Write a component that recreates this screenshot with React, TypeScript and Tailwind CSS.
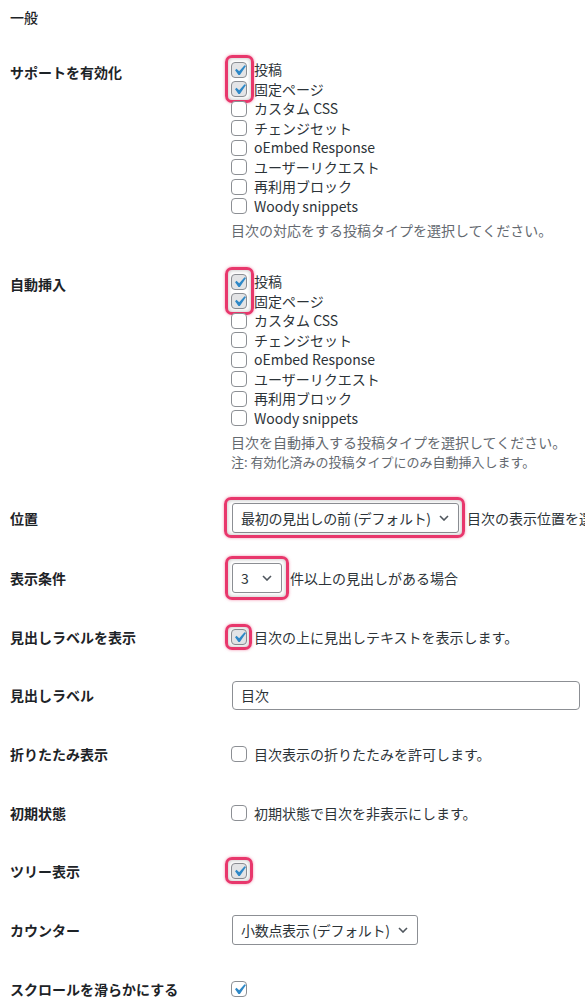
import React from "react";

const FONT = { fontFamily: '"Noto Sans CJK JP", "Noto Sans", sans-serif' };

function Check({ checked = false, hl = false }: { checked?: boolean; hl?: boolean }) {
  return (
    <span
      className={`relative inline-block w-4 h-4 shrink-0 rounded-[4px] border border-[#8c8f94] ${
        hl ? "bg-[#e3e4e6]" : "bg-white"
      }`}
    >
      {checked && (
        <svg
          viewBox="0 0 20 20"
          className="absolute left-[-3px] top-[-3px] w-[21px] h-[21px]"
        >
          <path d="M14.83 4.89l1.34.94-5.81 8.38H9.02L5.78 9.67l1.34-1.25 2.57 2.4z" fill="#2e88c7" />
        </svg>
      )}
    </span>
  );
}

function Highlight({ cls }: { cls: string }) {
  return (
    <span
      className={`pointer-events-none absolute rounded-[7px] border-[3px] border-[#e8376c] shadow-[0_0_3px_rgba(232,55,108,0.55),inset_0_0_4px_rgba(0,0,0,0.28)] ${cls}`}
    />
  );
}

function Item({ label, checked = false, hl = false }: { label: string; checked?: boolean; hl?: boolean }) {
  return (
    <div className="flex items-center h-[19.5px] gap-[7px] text-[#2c3338]">
      <Check checked={checked} hl={hl} />
      <span className="leading-[19.5px]">{label}</span>
    </div>
  );
}

function Chevron() {
  return (
    <svg viewBox="0 0 10 6" className="w-[10px] h-[6px] shrink-0">
      <polyline points="1,1 5,5 9,1" fill="none" stroke="#50575e" strokeWidth="1.6" />
    </svg>
  );
}

function Select({ text, w }: { text: string; w: string }) {
  return (
    <div
      className={`flex items-center justify-between gap-1 h-[30px] ${w} shrink-0 rounded-[3px] border border-[#8c8f94] bg-white pl-2 pr-[9px] text-[#2c3338]`}
    >
      <span className="leading-[20px] tracking-[-0.3px]">{text}</span>
      <Chevron />
    </div>
  );
}

const others = ["カスタム CSS", "チェンジセット", "oEmbed Response", "ユーザーリクエスト", "再利用ブロック", "Woody snippets"];

function Label({ children, top = false }: { children: React.ReactNode; top?: boolean }) {
  return (
    <div className={`w-[231px] shrink-0 pl-[10px] font-bold text-[#1d2327] leading-[20px] ${top ? "pt-[2px]" : ""}`}>
      {children}
    </div>
  );
}

function Row({ label, h, children }: { label: string; h: string; children: React.ReactNode }) {
  return (
    <div className={`flex items-center ${h}`}>
      <Label>{label}</Label>
      <div className="flex items-center whitespace-nowrap">{children}</div>
    </div>
  );
}

export default function App() {
  return (
    <div className="w-[585px] h-[1004px] overflow-hidden bg-white text-[14px] text-[#1d2327]" style={FONT}>
      <div className="h-[34px] flex items-center pl-[10px] font-medium text-[#1d2327]">一般</div>

      {/* Section 1 */}
      <div className="flex pt-[26px] pb-[15px]">
        <Label top>サポートを有効化</Label>
        <div className="flex flex-col whitespace-nowrap">
          <div className="relative">
            <Item label="投稿" checked hl />
            <Item label="固定ページ" checked hl />
            <Highlight cls="left-[-6px] top-[-5px] bottom-[-4px] w-[29px]" />
          </div>
          {others.map((o) => (
            <Item key={o} label={o} />
          ))}
          <div className="mt-[4px] leading-[20px] text-[#646970]">目次の対応をする投稿タイプを選択してください。</div>
        </div>
      </div>

      {/* Section 2 */}
      <div className="flex pt-[17px] pb-[16px]">
        <Label top>自動挿入</Label>
        <div className="flex flex-col whitespace-nowrap">
          <div className="relative">
            <Item label="投稿" checked hl />
            <Item label="固定ページ" checked hl />
            <Highlight cls="left-[-6px] top-[-5px] bottom-[-4px] w-[29px]" />
          </div>
          {others.map((o) => (
            <Item key={o} label={o} />
          ))}
          <div className="mt-[4px] leading-[20px] text-[#646970]">目次を自動挿入する投稿タイプを選択してください。</div>
          <div className="leading-[20px] text-[13px] text-[#646970]">注: 有効化済みの投稿タイプにのみ自動挿入します。</div>
        </div>
      </div>

      <Row label="位置" h="h-[60px]">
        <div className="relative ml-px">
          <Select text="最初の見出しの前 (デフォルト)" w="w-[227px]" />
          <Highlight cls="left-[-8px] right-[-6px] top-[-6px] bottom-[-5px]" />
        </div>
        <span className="ml-[8px] leading-[20px] text-[#2c3338]">目次の表示位置を選択してください。</span>
      </Row>

      <Row label="表示条件" h="h-[60px]">
        <div className="relative ml-px">
          <Select text="3" w="w-[50px]" />
          <Highlight cls="left-[-7px] right-[-7px] top-[-7px] bottom-[-7px]" />
        </div>
        <span className="ml-[8px] leading-[20px] text-[#2c3338]">件以上の見出しがある場合</span>
      </Row>

      <Row label="見出しラベルを表示" h="h-[58px]">
        <div className="relative flex">
          <Check checked hl />
          <Highlight cls="left-[-6px] right-[-5px] top-[-5px] bottom-[-5px]" />
        </div>
        <span className="ml-[7px] leading-[20px] text-[#2c3338]">目次の上に見出しテキストを表示します。</span>
      </Row>

      <Row label="見出しラベル" h="h-[58px]">
        <div className="ml-px flex items-center h-[29px] w-[348px] rounded-[4px] border border-[#8c8f94] bg-white px-2 text-[#2c3338]">
          目次
        </div>
      </Row>

      <Row label="折りたたみ表示" h="h-[60px]">
        <Check />
        <span className="ml-[7px] leading-[20px] text-[#2c3338]">目次表示の折りたたみを許可します。</span>
      </Row>

      <Row label="初期状態" h="h-[58px]">
        <Check />
        <span className="ml-[7px] leading-[20px] text-[#2c3338]">初期状態で目次を非表示にします。</span>
      </Row>

      <Row label="ツリー表示" h="h-[58px]">
        <div className="relative flex">
          <Check checked hl />
          <Highlight cls="left-[-6px] right-[-6px] top-[-6px] bottom-[-5px]" />
        </div>
      </Row>

      <Row label="カウンター" h="h-[60px]">
        <div className="ml-px">
          <Select text="小数点表示 (デフォルト)" w="w-[186px]" />
        </div>
      </Row>

      <Row label="スクロールを滑らかにする" h="h-[58px]">
        <Check checked />
      </Row>
    </div>
  );
}
